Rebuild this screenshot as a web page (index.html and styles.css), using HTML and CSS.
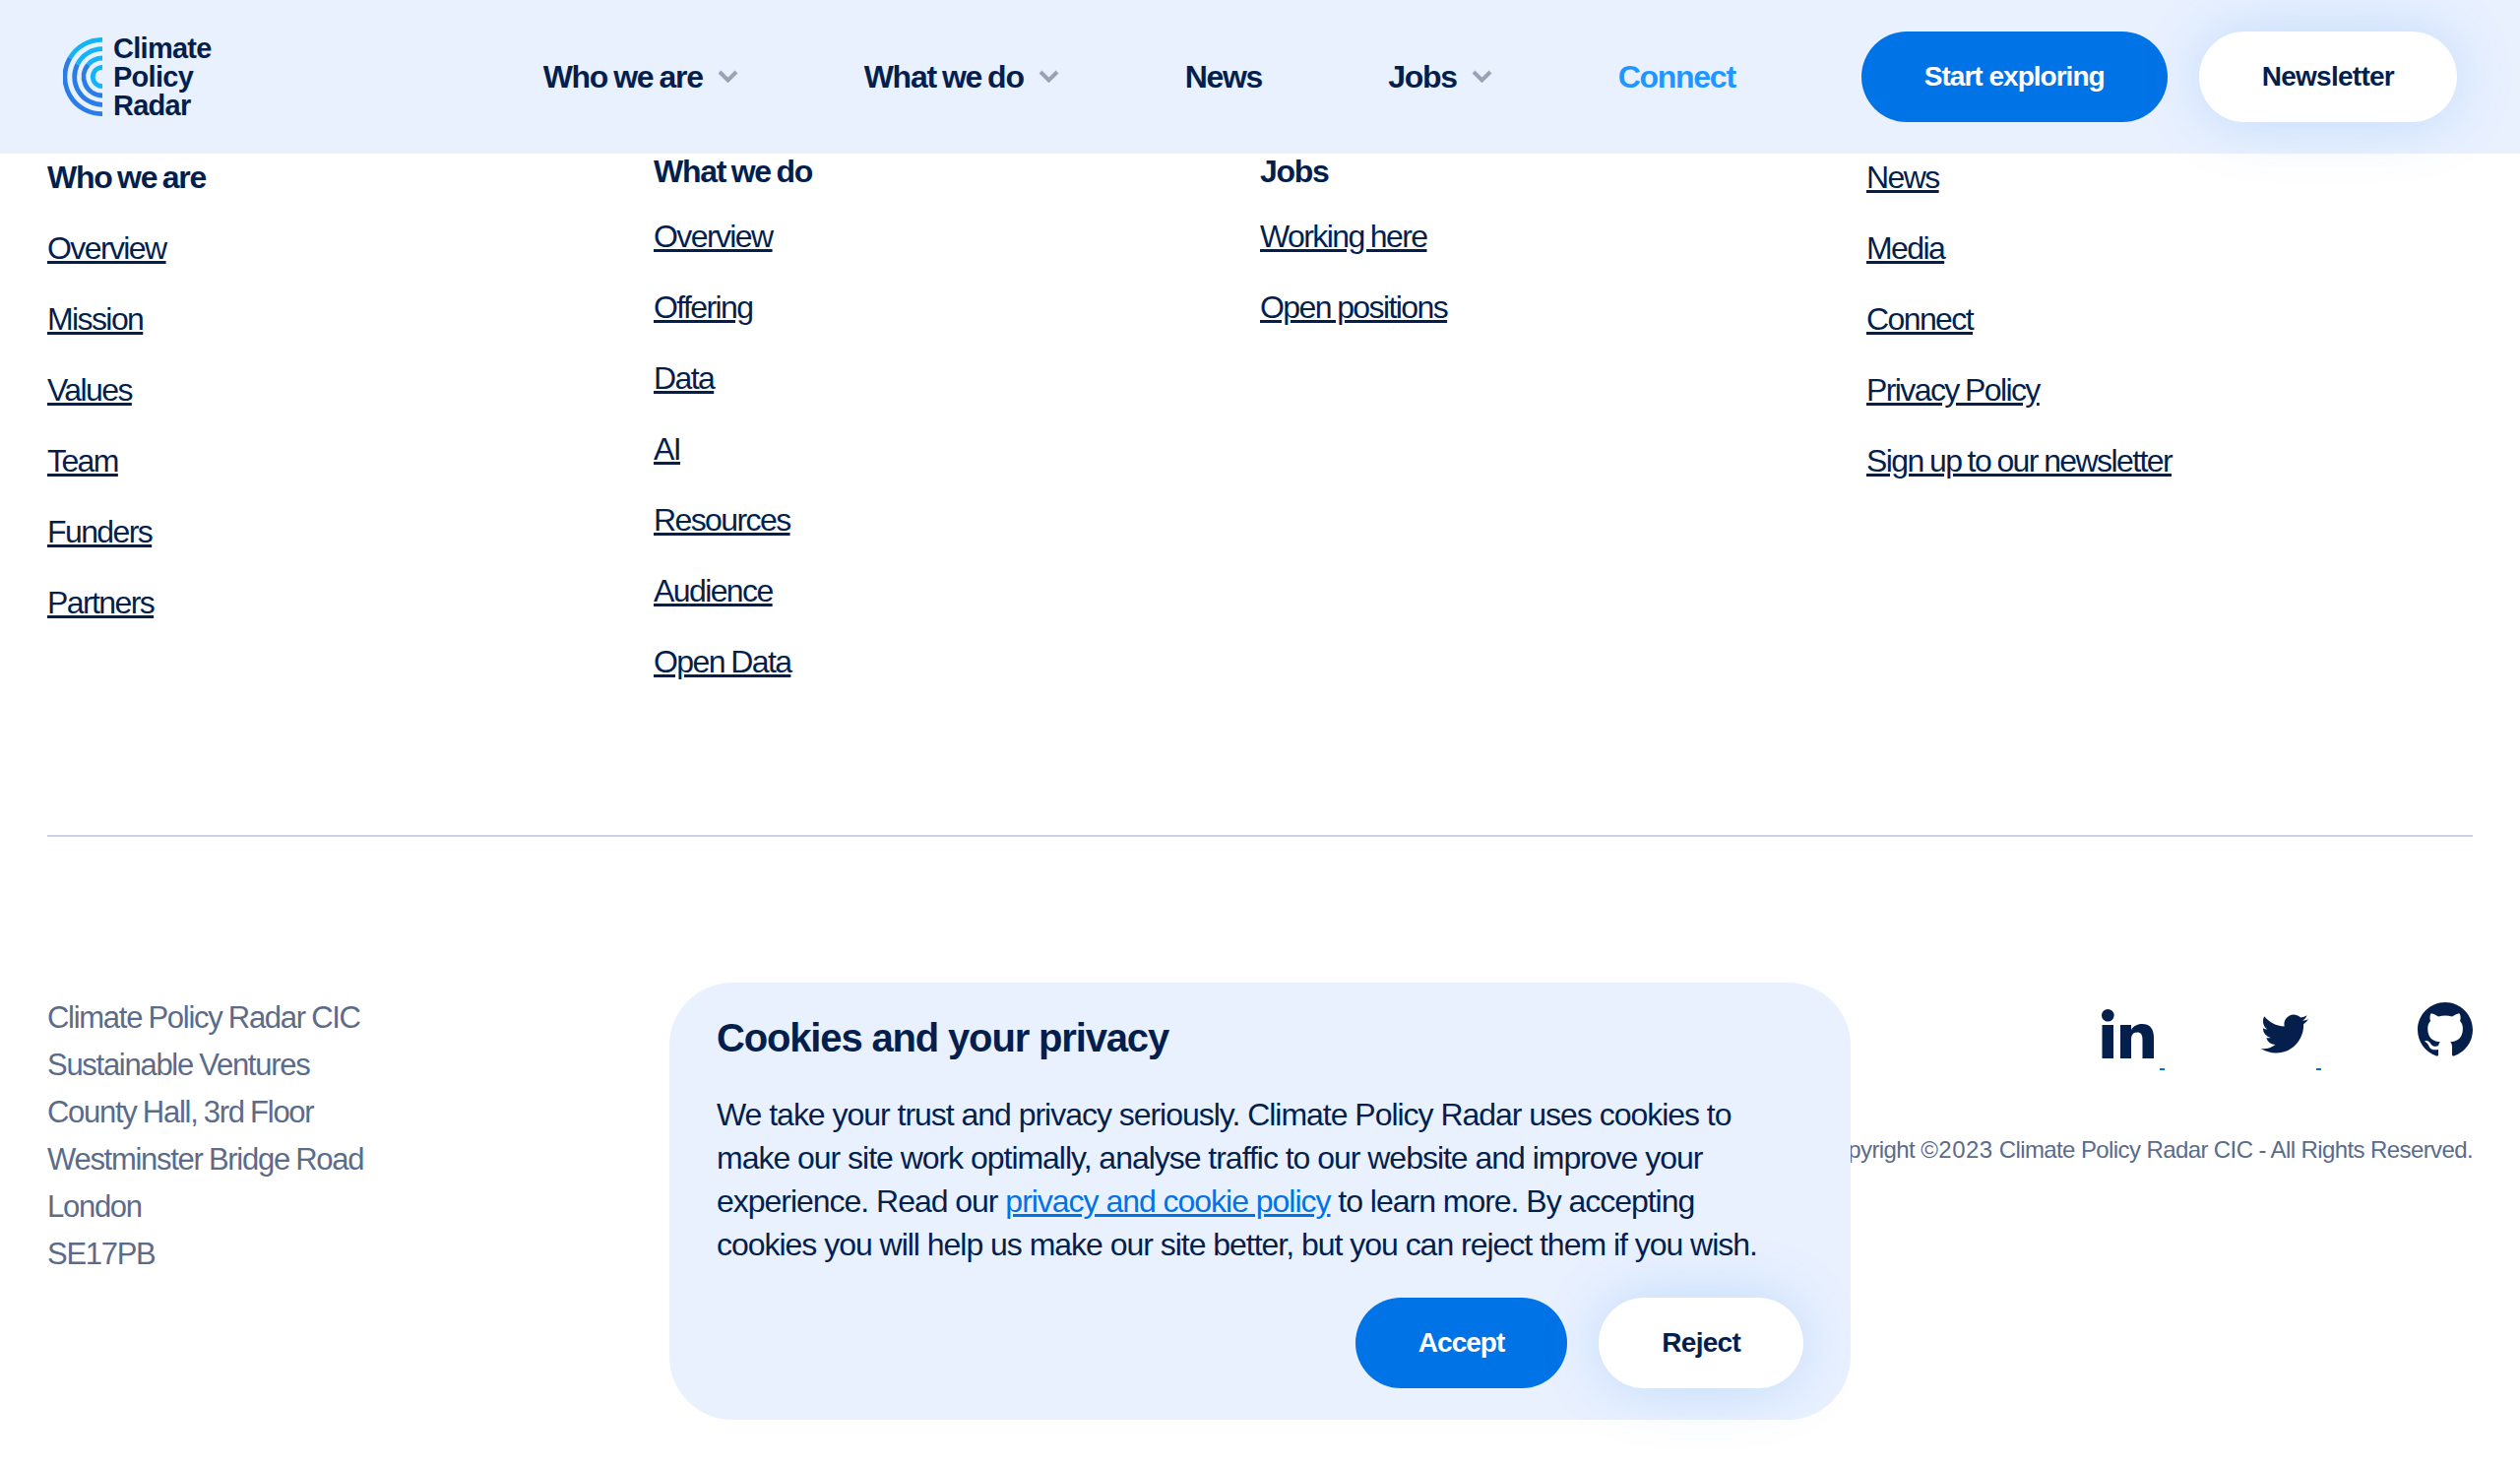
FILE: index.html
```html
<!DOCTYPE html>
<html lang="en">
<head>
  <meta charset="UTF-8">
  <title>Climate Policy Radar</title>
  <link rel="stylesheet" href="styles.css">
</head>
<body>
  <header class="site-header">
    <a class="logo" href="#">
      <svg class="logo-mark" width="42" height="80" viewBox="0 0 42 80" fill="none" stroke-width="4.8">
        <path d="M40 2.4A37.6 37.6 0 0 0 7 21" stroke="#12b5f7"/>
        <path d="M7 21A37.6 37.6 0 0 0 40 77.6" stroke="#2a7de9"/>
        <path d="M40 11.7A28.3 28.3 0 0 0 14.6 27.5" stroke="#12b5f7"/>
        <path d="M14.6 27.5A28.3 28.3 0 0 0 40 68.3" stroke="#2a7de9"/>
        <path d="M40 21A19 19 0 0 0 25.500 27.7" stroke="#12b5f7"/>
        <path d="M25.500 27.700A19 19 0 0 0 40 59" stroke="#2a7de9"/>
        <path d="M40 30.300A9.700 9.700 0 0 0 40 49.700" stroke="#12b5f7"/>
      </svg>
      <span class="logo-text">Climate<br>Policy<br>Radar</span>
    </a>
    <div class="header-right">
      <nav class="main-nav">
        <a href="#">Who we are
          <svg class="chevron" width="21" height="13" viewBox="0 0 21 13"><path d="M2 2l8.500 8.500L19 2"/></svg>
        </a>
        <a href="#">What we do
          <svg class="chevron" width="21" height="13" viewBox="0 0 21 13"><path d="M2 2l8.500 8.500L19 2"/></svg>
        </a>
        <a href="#">News</a>
        <a href="#">Jobs
          <svg class="chevron" width="21" height="13" viewBox="0 0 21 13"><path d="M2 2l8.500 8.500L19 2"/></svg>
        </a>
        <a class="active" href="#">Connect</a>
      </nav>
      <div class="btn-group">
        <a class="btn btn-primary" href="#">Start exploring</a>
        <a class="btn btn-white" href="#">Newsletter</a>
      </div>
    </div>
  </header>

  <footer class="site-footer">
    <div class="link-grid">
      <div class="link-col">
        <h3>Who we are</h3>
        <ul>
          <li><a href="#">Overview</a></li>
          <li><a href="#">Mission</a></li>
          <li><a href="#">Values</a></li>
          <li><a href="#">Team</a></li>
          <li><a href="#">Funders</a></li>
          <li><a href="#">Partners</a></li>
        </ul>
      </div>
      <div class="link-col link-col-raised">
        <h3>What we do</h3>
        <ul>
          <li><a href="#">Overview</a></li>
          <li><a href="#">Offering</a></li>
          <li><a href="#">Data</a></li>
          <li><a href="#">AI</a></li>
          <li><a href="#">Resources</a></li>
          <li><a href="#">Audience</a></li>
          <li><a href="#">Open Data</a></li>
        </ul>
      </div>
      <div class="link-col link-col-raised">
        <h3>Jobs</h3>
        <ul>
          <li><a href="#">Working here</a></li>
          <li><a href="#">Open positions</a></li>
        </ul>
      </div>
      <div class="link-col">
        <ul>
          <li><a href="#">News</a></li>
          <li><a href="#">Media</a></li>
          <li><a href="#">Connect</a></li>
          <li><a href="#">Privacy Policy</a></li>
          <li><a href="#">Sign up to our newsletter</a></li>
        </ul>
      </div>
    </div>

    <div class="footer-bottom">
      <address class="address">
        Climate Policy Radar CIC<br>
        Sustainable Ventures<br>
        County Hall, 3rd Floor<br>
        Westminster Bridge Road<br>
        London<br>
        SE17PB
      </address>
      <div class="social-col">
        <div class="social-links">
          <a class="social-link" href="#">
            <svg class="icon-linkedin" width="53" height="50" viewBox="0 0 53 50"><circle cx="6.300" cy="6.300" r="6.300"/><rect x="0.500" y="16" width="11.500" height="34"/><path d="M19 16h11v5c2-3.500 6-6 11-6 9 0 12 6 12 14v21H41.500V31c0-5-1.500-7.500-5.500-7.500-4.500 0-6 3-6 8V50H19z"/></svg>
            <span class="social-dot"></span>
          </a>
          <a class="social-link social-link-twitter" href="#">
            <svg class="icon-twitter" width="48" height="48" viewBox="0 0 24 24"><path d="M23.953 4.570a10 10 0 01-2.825.775 4.958 4.958 0 002.163-2.723c-.951.555-2.005.959-3.127 1.184a4.920 4.920 0 00-8.384 4.482C7.690 8.095 4.067 6.130 1.640 3.162a4.822 4.822 0 00-.666 2.475c0 1.710.870 3.213 2.188 4.096a4.904 4.904 0 01-2.228-.616v.060a4.923 4.923 0 003.946 4.827 4.996 4.996 0 01-2.212.085 4.936 4.936 0 004.604 3.417 9.867 9.867 0 01-6.102 2.105c-.390 0-.779-.023-1.170-.067a13.995 13.995 0 007.557 2.209c9.053 0 13.998-7.496 13.998-13.985 0-.210 0-.420-.015-.630A9.935 9.935 0 0024 4.590z"/></svg>
            <span class="social-dot"></span>
          </a>
          <a class="social-link" href="#">
            <svg width="56" height="56" viewBox="0 0 16 16"><path d="M8 0C3.580 0 0 3.580 0 8c0 3.540 2.290 6.530 5.470 7.590.400.070.550-.170.550-.380 0-.190-.010-.820-.010-1.490-2.010.370-2.530-.490-2.690-.940-.090-.230-.480-.940-.820-1.130-.280-.150-.680-.520-.010-.530.630-.010 1.080.580 1.230.820.720 1.210 1.870.870 2.330.660.070-.520.280-.870.510-1.070-1.780-.200-3.640-.890-3.640-3.950 0-.870.310-1.590.820-2.150-.080-.200-.360-1.020.080-2.120 0 0 .670-.210 2.200.820.640-.180 1.320-.270 2-.270.680 0 1.360.090 2 .270 1.530-1.040 2.200-.820 2.200-.820.440 1.100.160 1.920.080 2.120.510.560.820 1.270.820 2.150 0 3.070-1.870 3.750-3.650 3.950.290.250.540.730.540 1.480 0 1.070-.010 1.930-.010 2.200 0 .210.150.460.550.380A8.013 8.013 0 0016 8c0-4.420-3.580-8-8-8z"/></svg>
          </a>
        </div>
        <p class="copyright">Copyright <span class="copyright-year">©2023</span> Climate Policy Radar CIC - All Rights Reserved.</p>
      </div>
    </div>
  </footer>

  <div class="cookie-box">
    <h2>Cookies and your privacy</h2>
    <p>We take your trust and privacy seriously. Climate Policy Radar uses cookies to make our site work optimally, analyse traffic to our website and improve your experience. Read our <a href="#">privacy and cookie policy</a> to learn more. By accepting cookies you will help us make our site better, but you can reject them if you wish.</p>
    <div class="cookie-actions">
      <a class="btn btn-primary" href="#">Accept</a>
      <a class="btn btn-white" href="#">Reject</a>
    </div>
  </div>
</body>
</html>
```

FILE: styles.css
```css
body {
  font-family: "Liberation Sans", Arial, sans-serif;
  background: #fff;
  margin: 0;
  color: #051f4d;
  font-size: 32px;
  letter-spacing: -0.04em;
  height: 1490px;
  overflow: hidden;
}
a {
  color: inherit;
}
.site-header {
  display: flex;
  justify-content: space-between;
  align-items: center;
  height: 156px;
  padding: 0 64px;
  background: #e9f1ff;
  position: relative;
}
.logo {
  display: flex;
  align-items: center;
  gap: 9px;
  text-decoration: none;
}
.logo-text {
  font-size: 29px;
  line-height: 29px;
  font-weight: 700;
  letter-spacing: -0.025em;
}
.header-right {
  display: flex;
  align-items: center;
  gap: 128px;
}
.main-nav {
  display: flex;
  align-items: center;
  gap: 128px;
}
.main-nav a {
  display: flex;
  align-items: center;
  gap: 15px;
  font-weight: 700;
  text-decoration: none;
  white-space: nowrap;
  word-spacing: -1.5px;
}
.main-nav a.active {
  color: #1f97ff;
}
.chevron {
  fill: none;
  stroke: #9aa3b5;
  stroke-width: 4;
  margin-bottom: 2px;
}
.btn-group {
  display: flex;
  gap: 32px;
}
.btn {
  display: block;
  height: 92px;
  line-height: 92px;
  padding: 0 64px;
  border-radius: 46px;
  font-size: 28px;
  font-weight: 700;
  text-decoration: none;
  white-space: nowrap;
}
.btn-primary {
  background: #0073e6;
  color: #fff;
  letter-spacing: -0.035em;
}
.btn-white {
  background: #fff;
  color: #051f4d;
  letter-spacing: -0.026em;
  box-shadow: 0 0 64px rgba(0,115,230,0.18);
}
.site-footer {
  padding: 0 48px;
}
.link-grid {
  display: grid;
  grid-template-columns: repeat(4, 616px);
  align-items: start;
  padding-bottom: 152px;
  border-bottom: 2px solid #c9d1e4;
}
.link-col h3 {
  margin: 0 0 24px;
  font-size: 32px;
  line-height: 48px;
  font-weight: 700;
  word-spacing: -2px;
}
.link-col ul {
  list-style: none;
  margin: 0;
  padding: 0;
}
.link-col li {
  line-height: 48px;
  margin-bottom: 24px;
  letter-spacing: -0.05em;
  word-spacing: -1px;
}
.link-col li:last-child {
  margin-bottom: 0;
}
.link-col a {
  text-decoration-thickness: 3px;
}
.link-col-raised {
  margin-top: -6px;
}
.link-col-raised h3 {
  margin-bottom: 18px;
}
.footer-bottom {
  display: flex;
  justify-content: space-between;
  align-items: flex-start;
  margin-top: 160px;
}
.address {
  font-style: normal;
  font-size: 31px;
  line-height: 48px;
  word-spacing: -1px;
  color: #5b6b8a;
}
.social-col {
  display: flex;
  flex-direction: column;
  align-items: flex-end;
  padding-top: 8px;
}
.social-links {
  display: flex;
  align-items: flex-start;
  gap: 98px;
}
.social-link {
  display: flex;
  align-items: flex-start;
  gap: 6px;
}
.social-link-twitter {
  gap: 8px;
}
.social-link svg {
  fill: #051f4d;
  display: block;
}
.icon-linkedin {
  margin-top: 7px;
}
.icon-twitter {
  margin-top: 8px;
}
.social-dot {
  width: 5px;
  height: 2px;
  margin-top: 67px;
  background: #0073e6;
}
.copyright {
  margin: 63px 0 0;
  font-size: 24px;
  line-height: 36px;
  letter-spacing: -0.025em;
  color: #5b6b8a;
  white-space: nowrap;
}
.copyright-year {
  letter-spacing: 0.02em;
}
.cookie-box {
  position: fixed;
  left: 680px;
  bottom: 48px;
  box-sizing: border-box;
  width: 1200px;
  height: 444px;
  padding: 32px 48px;
  background: #e9f1ff;
  border-radius: 64px;
}
.cookie-box h2 {
  margin: 0 0 32px;
  font-size: 40px;
  line-height: 48px;
  font-weight: 700;
  letter-spacing: -0.029em;
}
.cookie-box p {
  margin: 0;
  max-width: 1060px;
  line-height: 44px;
  letter-spacing: -0.032em;
}
.cookie-box p a {
  color: #0073e6;
  text-decoration-thickness: 3px;
}
.cookie-actions {
  display: flex;
  justify-content: flex-end;
  gap: 32px;
  margin-top: 32px;
}
```
